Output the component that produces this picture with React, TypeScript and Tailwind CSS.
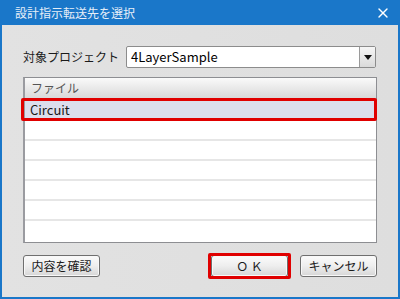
import { X } from 'lucide-react';

const font = { fontFamily: '"Noto Sans CJK JP", "Noto Sans", sans-serif' };

function Button({ label, width, highlight }: { label: string; width: string; highlight?: boolean }) {
  return (
    <div className={`relative ${width} h-[22px]`}>
      <div className="h-full w-full rounded-[3px] border border-[#6f6f6f] bg-gradient-to-b from-[#fbfbfb] via-[#eeeeee] to-[#d6d6d6] flex items-center justify-center text-[12px] text-[#1a1a1a] whitespace-nowrap shadow-[inset_0_0_0_1px_#f8f8f8]">
        {label}
      </div>
      {highlight && (
        <div className="absolute -left-[3px] -right-[3px] -top-[2px] -bottom-[2px] rounded-[2px] border-[3px] border-[#e00000]" />
      )}
    </div>
  );
}

export default function App() {
  const rows = Array.from({ length: 6 });

  return (
    <div style={font} className="w-[400px] h-[299px] bg-[#1a77c9] flex flex-col">
      <div className="h-[25px] flex items-center justify-between pl-[15px] pr-[9px] text-[12px] text-[#e6eef8]">
        <span>設計指示転送先を選択</span>
        <X size={16} strokeWidth={2} className="text-white" />
      </div>

      <div className="flex-1 mx-[2px] mb-[2px] bg-gradient-to-r from-[#e2e2e2] to-[#dedede] pl-[21px] pr-[21px] flex flex-col">
        <div className="mt-[21px] h-[22px] flex items-center">
          <span className="w-[103px] shrink-0 whitespace-nowrap text-[12px] text-[#1a1a1a]">対象プロジェクト</span>
          <div className="w-[250px] h-[22px] flex rounded-[2px] border border-[#8c8c8c] bg-white">
            <div className="flex-1 flex items-center pl-[4px] text-[13px] text-black">4LayerSample</div>
            <div className="w-[16px] border-l border-[#9a9a9a] bg-gradient-to-b from-[#f6f6f6] to-[#dadada] flex items-center justify-center">
              <svg width="8" height="5" viewBox="0 0 8 5">
                <path d="M0 0 H8 L4 5 Z" fill="#111" />
              </svg>
            </div>
          </div>
        </div>

        <div className="mt-[9px] w-[354px] h-[166px] border border-[#8d8e92] border-l-2 border-l-[#9a9ba0] bg-white flex flex-col">
          <div className="h-[20px] flex items-center pl-[6px] text-[12px] text-[#555] bg-gradient-to-b from-[#fafafa] to-[#d9d9d9]">
            ファイル
          </div>
          <div className="relative h-[23px] flex items-center pl-[5px] bg-[#dcdeec] text-[13px] text-[#1a1a1a]">
            Circuit
            <div className="absolute -left-[4px] -right-[1px] top-0 bottom-0 rounded-[2px] border-[3px] border-[#e00000]" />
          </div>
          {rows.map((_, i) => (
            <div key={i} className="h-[20px] border-b-2 border-[#e6e6e6] last:border-b-0" />
          ))}
        </div>

        <div className="mt-[12px] flex items-center">
          <Button label="内容を確認" width="w-[77px]" />
          <div className="flex-1" />
          <Button label="Ｏ Ｋ" width="w-[77px]" highlight />
          <div className="w-[12px]" />
          <Button label="キャンセル" width="w-[77px]" />
        </div>
      </div>
    </div>
  );
}
